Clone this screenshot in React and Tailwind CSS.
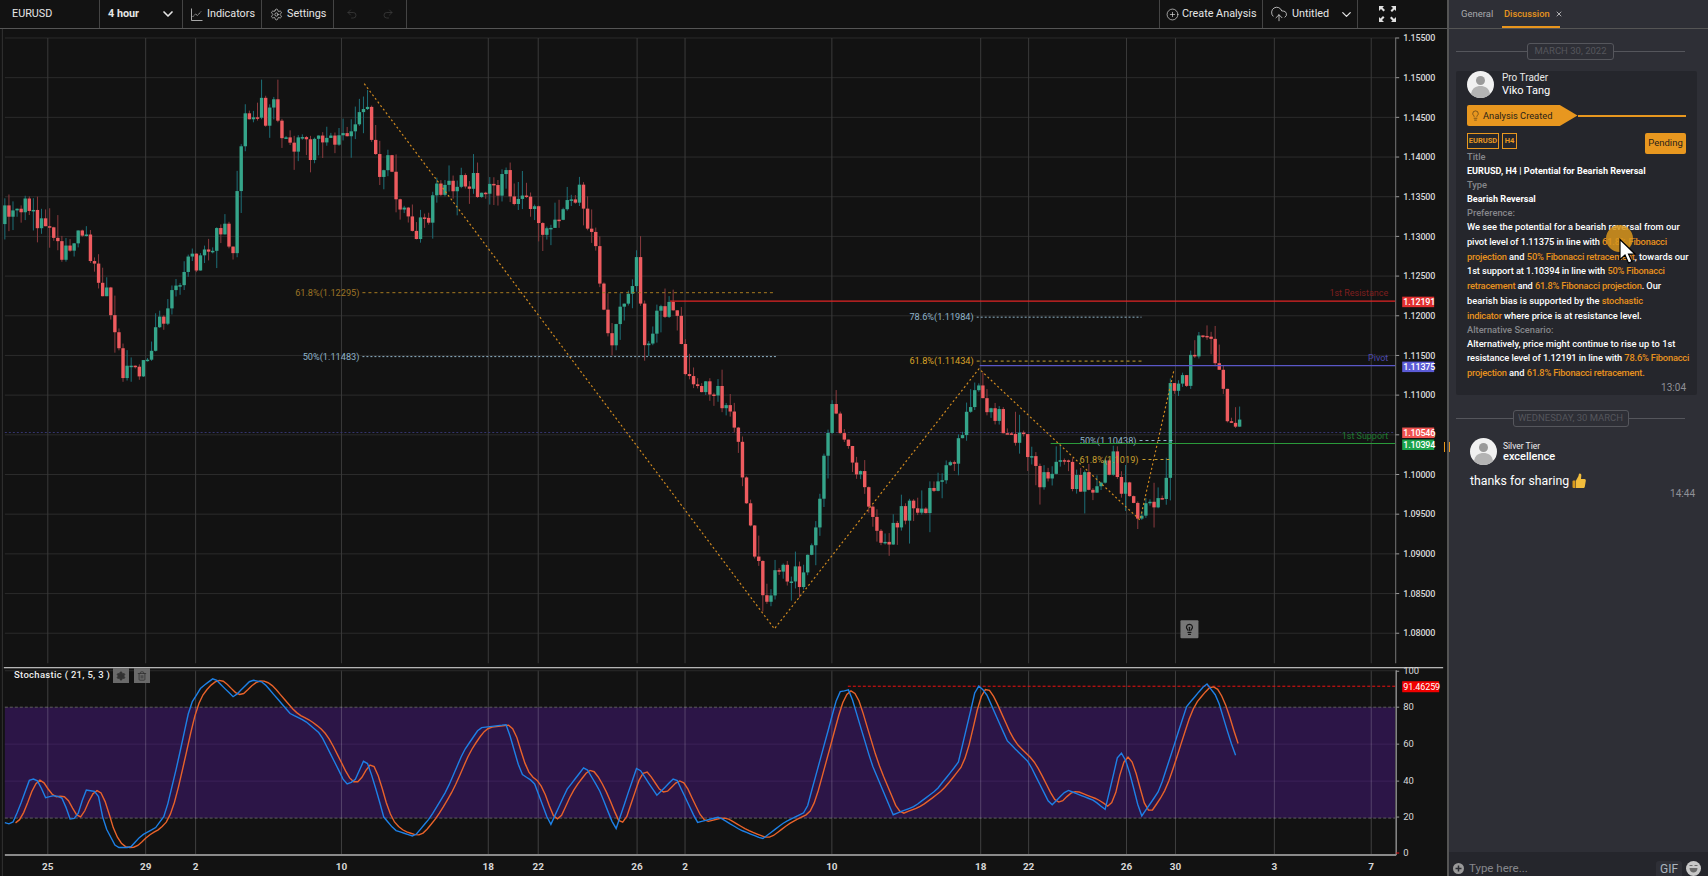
import React from "react";
import { ChevronDown, Settings, CirclePlus, CloudUpload, Undo2, Redo2, Lightbulb, X, Trash2 } from "lucide-react";

const S = 1.0893;

// price path, in screenshot coordinates
const pathStart = [
  [0, 205], [8, 190], [15, 180], [30, 195], [45, 212], [60, 232], [75, 212], [85, 235], [95, 265], [105, 300], [110, 335],
  [125, 340], [140, 315], [155, 275], [170, 245],
];
// this stretch was read off a 3x crop at (200,90)
const pathCrop = [
  [0, 505], [25, 480], [38, 440], [60, 420], [85, 440], [100, 470], [112, 280], [125, 95], [145, 90], [165, 60], [185, 50],
  [200, 90], [220, 60], [235, 125], [260, 130], [280, 150], [300, 120], [320, 185], [350, 170], [385, 145], [410, 120],
  [435, 130], [465, 100], [488, 95], [495, 10], [505, 50], [510, 130], [530, 230], [570, 210], [580, 330], [610, 320],
  [625, 400], [650, 420], [690, 400], [700, 310], [740, 310], [770, 255], [820, 260], [835, 300], [880, 295], [920, 270],
  [935, 380], [960, 310], [985, 290], [1000, 370], [1030, 420], [1055, 420], [1070, 340], [1090, 380], [1130, 310],
  [1150, 320], [1165, 420], [1190, 460], [1195, 590],
].map(([x, y]) => [(200 + x / 3) / S, (90 + y / 3) / S]);
const pathEnd = [
  [560, 315], [575, 270], [585, 240], [590, 320], [605, 280], [620, 290], [630, 345], [650, 355], [670, 375],
  [680, 420], [693, 510], [703, 550], [715, 525], [735, 530], [750, 480], [763, 370], [775, 400], [790, 440], [808, 495],
  [820, 490], [835, 460], [850, 465], [870, 430], [885, 400], [897, 340], [905, 370], [925, 395], [945, 410], [955, 450],
  [970, 415], [990, 445], [1010, 440], [1022, 420], [1040, 470], [1055, 460], [1072, 445], [1075, 350], [1090, 345],
  [1100, 315], [1112, 310], [1120, 350], [1130, 385], [1138, 395],
];
const pricePath = [...pathStart, ...pathCrop, ...pathEnd];

// %K line, in screenshot coordinates
const stochPath = [
  [3, 755], [10, 757], [16, 744], [27, 714], [37, 718], [38, 733], [50, 730], [57, 733], [64, 753], [70, 750], [78, 725],
  [89, 727], [95, 757], [106, 778], [119, 778], [129, 767], [142, 760], [151, 748], [163, 698], [174, 647], [184, 631],
  [196, 622], [214, 640], [230, 624], [241, 626], [266, 655], [280, 662], [294, 674], [317, 720], [325, 717], [335, 695],
  [342, 715], [352, 750], [362, 762], [380, 768], [395, 750], [410, 725], [425, 690], [440, 668], [465, 665], [478, 710],
  [490, 718], [505, 758], [520, 725], [537, 703], [550, 725], [565, 762], [585, 703], [603, 730], [620, 713], [640, 755],
  [660, 750], [680, 762], [700, 770], [720, 755], [740, 745], [755, 690], [770, 635], [780, 633], [800, 700], [820, 748],
  [840, 740], [860, 725], [880, 700], [897, 628], [905, 635], [925, 680], [945, 700], [965, 740], [980, 725], [1005, 735],
  [1015, 743], [1028, 688], [1035, 700], [1048, 750], [1065, 725], [1090, 648], [1108, 627], [1118, 640], [1130, 680], [1138, 702],
];

const interp = (path, x) => {
  for (let i = 1; i < path.length; i++) {
    if (x <= path[i][0]) {
      const [x0, y0] = path[i - 1];
      const [x1, y1] = path[i];
      return y0 + ((y1 - y0) * (x - x0)) / (x1 - x0 || 1);
    }
  }
  return path[path.length - 1][1];
};

const makeCandles = () => {
  let seed = 4242;
  const rnd = () => {
    seed = (seed * 16807) % 2147483647;
    return seed / 2147483647;
  };
  const out = [];
  let prev = interp(pricePath, 0) * S;
  for (let x = 4; x < 1241; x += 4.08) {
    const close = interp(pricePath, x / S) * S + (rnd() - 0.5) * 24;
    const top = Math.min(prev, close);
    const bottom = Math.max(prev, close);
    out.push({
      x,
      top,
      h: Math.max(bottom - top, 1.5),
      high: top - rnd() * rnd() * 26,
      low: bottom + rnd() * rnd() * 26,
      up: close < prev,
    });
    prev = close;
  }
  return out;
};

const candles = makeCandles();

const kPoints = [];
for (let x = 4; x < 1240; x += 4.08) kPoints.push([x, interp(stochPath, x / S) * S]);
const dPoints = kPoints.slice(2).map((p, i) => [p[0] + 2.5, (kPoints[i][1] + kPoints[i + 1][1] + p[1]) / 3]);
const toLine = (pts) => pts.map((p) => p[0].toFixed(1) + "," + p[1].toFixed(1)).join(" ");

const priceTicks = [
  "1.15500", "1.15000", "1.14500", "1.14000", "1.13500", "1.13000", "1.12500", "1.12000",
  "1.11500", "1.11000", "1.10500", "1.10000", "1.09500", "1.09000", "1.08500", "1.08000",
];
const timeTicks = [
  [47, "25"], [145, "29"], [195, "2"], [341, "10"], [488, "18"], [538, "22"], [637, "26"], [685, "2"],
  [832, "10"], [981, "18"], [1029, "22"], [1127, "26"], [1176, "30"], [1275, "3"], [1372, "7"],
];
const stochTicks = [[100, 671], [80, 707], [60, 744], [40, 781], [20, 817], [0, 853]];

const zigzag = [[334, 76], [711, 577], [899, 338], [1047, 477], [1078, 340]];

const dottedLines = [
  { x1: 362, x2: 776, y: 292, c: "#a87a20", dash: "3 3" },
  { x1: 362, x2: 776, y: 356, c: "#8fb3c8", dash: "2 2" },
  { x1: 977, x2: 1142, y: 316.5, c: "#8fb3c8", dash: "2 2" },
  { x1: 977, x2: 1142, y: 360.5, c: "#c9a030", dash: "3 3" },
  { x1: 1140, x2: 1175, y: 440, c: "#8fb3c8", dash: "3 3" },
  { x1: 1143, x2: 1173, y: 459, c: "#c9a030", dash: "3 3" },
];

const fibLabels = [
  { x: 359, y: 292, t: "61.8%(1.12295)", c: "#9c7426" },
  { x: 359, y: 356, t: "50%(1.11483)", c: "#8fb3c8" },
  { x: 974, y: 316.5, t: "78.6%(1.11984)", c: "#8fb3c8" },
  { x: 974, y: 360.5, t: "61.8%(1.11434)", c: "#d9a227" },
  { x: 1137, y: 440, t: "50%(1.10438)", c: "#8fb3c8" },
  { x: 1139, y: 459, t: "61.8%(1.1019)", c: "#c9a030" },
];

const levels = [
  { x1: 670, y: 300.5, c: "#e02525", name: "1st Resistance", nameC: "#7f1f1f", tag: "1.12191", tagBg: "#e23030", tagY: 301 },
  { x1: 980, y: 365, c: "#5a57c7", name: "Pivot", nameC: "#4d49ad", tag: "1.11375", tagBg: "#5b5bd6", tagY: 366 },
  { x1: 1051, y: 443, c: "#2a9a3a", name: "1st Support", nameC: "#1f7a30", tag: "1.10394", tagBg: "#1aa34a", tagY: 444 },
];

function Chart() {
  return (
    <svg width="1447" height="848" viewBox="0 28 1447 848" className="block">
      {/* price grid */}
      {priceTicks.map((t, i) => {
        const y = 37 + i * 39.73;
        return (
          <g key={t}>
            <line x1="4" x2="1396" y1={y} y2={y} stroke="#2b2b2b" />
            <line x1="1396" x2="1400" y1={y} y2={y} stroke="#999" />
            <text x="1404" y={y + 3.2} fontSize="9" fontWeight="500" letterSpacing="-0.15" fill="#d8d8d8">{t}</text>
          </g>
        );
      })}
      {timeTicks.map(([x, t]) => (
        <g key={x + t}>
          <line x1={x} x2={x} y1="37" y2="663" stroke="#3a3a3a" />
          <text x={x} y="870" fontSize="10" fontWeight="700" fill="#d8d8d8" textAnchor="middle">{t}</text>
        </g>
      ))}
      <line x1="1396.5" x2="1396.5" y1="37" y2="663" stroke="#777" />
      <line x1="1.5" x2="1.5" y1="28" y2="876" stroke="#333" />

      {/* dotted line of the last price, under the candles */}
      <line x1="4" x2="1396" y1="432" y2="432" stroke="#35356e" strokeDasharray="2 2" />

      {candles.map((c, i) => (
        <g key={i}>
          <line x1={c.x} x2={c.x} y1={c.high} y2={c.low} stroke={c.up ? "#1d6f78" : "#8b3a3e"} />
          <rect x={c.x - 1.7} y={c.top} width="3.4" height={c.h} fill={c.up ? "#35a58a" : "#ee5b5f"} />
        </g>
      ))}

      <polyline
        points={zigzag.map((p) => p[0] * S + "," + p[1] * S).join(" ")}
        fill="none"
        stroke="#d08a20"
        strokeWidth="1.2"
        strokeDasharray="2 2.5"
      />
      {dottedLines.map((l, i) => (
        <line key={i} x1={l.x1} x2={l.x2} y1={l.y} y2={l.y} stroke={l.c} strokeDasharray={l.dash} />
      ))}
      {fibLabels.map((l) => (
        <text key={l.t} x={l.x} y={l.y + 3.2} fontSize="9.2" fill={l.c} textAnchor="end">{l.t}</text>
      ))}

      {levels.map((l) => (
        <g key={l.name}>
          <line x1={l.x1} x2="1396" y1={l.y} y2={l.y} stroke={l.c} strokeWidth="1.2" />
          <text x="1389" y={l.y - 5} fontSize="9" fill={l.nameC} textAnchor="end">{l.name}</text>
          <rect x="1403" y={l.tagY - 5} width="32" height="10.5" fill={l.tagBg} />
          <text x="1404" y={l.tagY + 3.5} fontSize="9" fontWeight="500" letterSpacing="-0.15" fill="#fff">{l.tag}</text>
        </g>
      ))}
      <rect x="1403" y="427" width="32" height="10.5" fill="#ef5350" />
      <text x="1404" y="435.5" fontSize="9" fontWeight="500" letterSpacing="-0.15" fill="#fff">1.10546</text>

      {/* lightbulb marker */}
      <rect x="1181" y="620" width="18" height="18" rx="1" fill="#777" />
      <g transform="translate(1184,623) scale(0.5)" fill="none" stroke="#161616" strokeWidth="2.400" strokeLinecap="round" strokeLinejoin="round">
        <path d="M15 14c.2-1 .7-1.700 1.500-2.500 1-.9 1.500-2.200 1.500-3.500A6 6 0 0 0 6 8c0 1 .2 2.200 1.500 3.500.7.7 1.300 1.500 1.500 2.500" />
        <path d="M9 18h6" />
        <path d="M10 22h4" />
        <path d="M12 8v6" />
      </g>

      {/* stochastic panel */}
      <rect x="4" y="707" width="1392" height="111" fill="#2c1547" />
      <line x1="4" x2="1396" y1="707" y2="707" stroke="#5e5e5e" strokeDasharray="3 2" />
      <line x1="4" x2="1396" y1="818" y2="818" stroke="#5e5e5e" strokeDasharray="3 2" />
      <line x1="4" x2="1396" y1="744" y2="744" stroke="#3c2258" />
      <line x1="4" x2="1396" y1="781" y2="781" stroke="#3c2258" />
      {timeTicks.map(([x, t]) => (
        <line key={x + t} x1={x} x2={x} y1="670" y2="855" stroke="#fff" strokeOpacity="0.2" />
      ))}
      <line x1="3" x2="1444" y1="667.5" y2="667.5" stroke="#e8e8e8" />
      <line x1="4" x2="1396" y1="670.5" y2="670.5" stroke="#2b2b2b" />
      <line x1="848" x2="1396" y1="686" y2="686" stroke="#f01010" strokeDasharray="3 2" />
      <polyline points={toLine(dPoints)} fill="none" stroke="#e8622a" strokeWidth="1.4" />
      <polyline points={toLine(kPoints)} fill="none" stroke="#1e80e6" strokeWidth="1.4" />
      <line x1="4" x2="1397" y1="855" y2="855" stroke="#8a8a8a" strokeWidth="2" />
      <line x1="1397" x2="1397" y1="670" y2="855" stroke="#8a8a8a" strokeWidth="1.5" />
      {stochTicks.map(([v, y]) => (
        <g key={v}>
          <line x1="1397" x2="1400" y1={y} y2={y} stroke={v === 0 ? "#f01010" : "#999"} />
          <text x="1404" y={y + 3.2} fontSize="9.5" fill="#d8d8d8">{v}</text>
        </g>
      ))}
      <rect x="1403" y="681" width="37" height="11" fill="#f00000" />
      <text x="1404" y="690" fontSize="9" letterSpacing="-0.1" fill="#fff">91.46259</text>
    </svg>
  );
}

const ToolCell = ({ className, children }) => (
  <div className={"flex h-full shrink-0 items-center whitespace-nowrap border-r border-[#444] " + className}>{children}</div>
);

function Toolbar() {
  return (
    <div className="flex h-[29px] shrink-0 items-center border-b border-[#555] bg-[#121212] text-[10.8px] text-[#e6e6e6]">
      <ToolCell className="w-[100px] pl-[12px]">EURUSD</ToolCell>
      <ToolCell className="w-[83px] justify-between pl-[8px] pr-[6px] font-bold">
        4 hour
        <ChevronDown size={16} strokeWidth={2.5} />
      </ToolCell>
      <ToolCell className="w-[79px] gap-[4px] pl-[8px]">
        <svg width="12" height="13" viewBox="0 0 12 13" fill="none" stroke="#cfcfcf" strokeWidth="0.8">
          <path d="M.5.5v12h11" />
          <path d="M1.500 9l3-3 2 1.500L10 3.500" strokeDasharray="1.600 .6" />
        </svg>
        Indicators
      </ToolCell>
      <ToolCell className="w-[72px] gap-[4px] pl-[8px]">
        <Settings size={13} strokeWidth={1.2} />
        Settings
      </ToolCell>
      <ToolCell className="w-[73px] gap-[24px] pl-[12px] text-[#3d3d3d]">
        <Undo2 size={12} strokeWidth={1.5} />
        <Redo2 size={12} strokeWidth={1.5} />
      </ToolCell>
      <div className="flex-1" />
      <div className="flex h-full w-[104px] shrink-0 items-center gap-[3px] whitespace-nowrap border-x border-[#444] pl-[6px]">
        <CirclePlus size={13} strokeWidth={1.2} />
        Create Analysis
      </div>
      <ToolCell className="w-[95px] gap-[4px] pl-[7px]">
        <CloudUpload size={18} strokeWidth={1} />
        Untitled
        <ChevronDown size={15} strokeWidth={2} className="ml-[6px]" />
      </ToolCell>
      <div className="flex h-full w-[89px] shrink-0 items-center pl-[21px]">
        <svg width="17" height="16" viewBox="0 0 17 16" fill="#e0e0e0">
          <path d="M0 0h5L3.500 1.500 6 4 4.500 5.500 2 3 .5 4.500 0 5z" />
          <path d="M17 0v5l-1.500-1.500L13 6l-1.500-1.500L14 2l-1.500-1.500L12 0z" />
          <path d="M0 16v-5l1.500 1.500L4 10l1.500 1.500L3 14l1.500 1.500L5 16z" />
          <path d="M17 16h-5l1.500-1.500L11 12l1.500-1.500L15 13l1.500-1.500.5-.5z" />
        </svg>
      </div>
    </div>
  );
}

const Avatar = ({ size }) => (
  <svg width={size} height={size} viewBox="0 0 27 27" className="shrink-0">
    <circle cx="13.5" cy="13.5" r="13.5" fill="#f1f1f1" />
    <circle cx="13.5" cy="9.500" r="4.500" fill="#9a9a9a" />
    <path d="M4 23c1-6 5-8 9.500-8s8.500 2 9.500 8a13.500 13.500 0 0 1-19 0z" fill="#b4b4b4" />
  </svg>
);

const DateSeparator = ({ label, boxClass }) => (
  <div className="flex h-[17px] items-center pl-[7px] pr-[23px]">
    <div className="h-px flex-1 bg-[#55565c]" />
    <div className={"flex h-[17px] shrink-0 items-center justify-center rounded-[3px] border border-[#55565c] text-[9.5px] text-[#55565c] " + boxClass}>
      {label}
    </div>
    <div className="h-px flex-1 bg-[#55565c]" />
  </div>
);

const Label = ({ children }) => <div className="h-[14px] leading-[14px] text-[#85868b]">{children}</div>;
const Strong = ({ children }) => <div className="h-[14px] text-[9.1px] font-bold leading-[14px] text-white">{children}</div>;
const Line = ({ children, tight }) => (
  <div className={"h-[14.8px] whitespace-nowrap leading-[14.8px] text-white " + (tight ? "tracking-[-0.1px]" : "")}>{children}</div>
);
const Hl = ({ children }) => <span className="tracking-[-0.2px] text-[#e8921e]">{children}</span>;

function AnalysisCard() {
  return (
    <div className="ml-[7px] mt-[11px] h-[324px] w-[241px] rounded-[2px] bg-[#25262c] px-[11px] text-[9.3px] font-medium">
      <div className="flex h-[27px] items-center gap-[8px]">
        <Avatar size={27} />
        <div className="font-normal">
          <div className="text-[10px] leading-[12px] text-[#e8e8e8]">Pro Trader</div>
          <div className="text-[11px] leading-[14px] text-white">Viko Tang</div>
        </div>
      </div>
      <div className="mt-[7px] flex h-[21px] items-center">
        <div className="flex h-full w-[112px] items-center gap-[2px] rounded-l-[2px] bg-[#e8971f] pl-[3px] font-normal text-[#2a2218] [clip-path:polygon(0_0,84%_0,100%_50%,84%_100%,0_100%)]">
          <Lightbulb size={11} strokeWidth={1.2} />
          Analysis Created
        </div>
        <div className="h-[2px] w-[110px] bg-[#e8971f]" />
      </div>
      <div className="mt-[7px] flex h-[17px] items-start justify-between">
        <div className="flex gap-[3px] text-[7.5px] font-bold text-[#e8971f]">
          <div className="flex h-[16px] w-[32px] items-center justify-center border border-[#e8971f]">EURUSD</div>
          <div className="flex h-[16px] w-[15px] items-center justify-center border border-[#e8971f]">H4</div>
        </div>
        <div className="flex h-[21px] w-[41px] items-center justify-center rounded-[2px] bg-[#e8971f] text-[9.5px] font-normal text-[#2a2218]">
          Pending
        </div>
      </div>
      <Label>Title</Label>
      <Strong>EURUSD, H4 | Potential for Bearish Reversal</Strong>
      <Label>Type</Label>
      <Strong>Bearish Reversal</Strong>
      <Label>Preference:</Label>
      <Line>We see the potential for a bearish reversal from our</Line>
      <Line tight>pivot level of 1.11375 in line with <Hl>61.8% Fibonacci</Hl></Line>
      <Line><Hl>projection</Hl> and <Hl>50% Fibonacci retracement</Hl>, towards our</Line>
      <Line tight>1st support at 1.10394 in line with <Hl>50% Fibonacci</Hl></Line>
      <Line tight><Hl>retracement</Hl> and <Hl>61.8% Fibonacci projection</Hl>. Our</Line>
      <Line>bearish bias is supported by the <Hl>stochastic</Hl></Line>
      <Line><Hl>indicator</Hl> where price is at resistance level.</Line>
      <div className="-mt-[1px]">
        <Label>Alternative Scenario:</Label>
      </div>
      <Line>Alternatively, price might continue to rise up to 1st</Line>
      <Line tight>resistance level of 1.12191 in line with <Hl>78.6% Fibonacci</Hl></Line>
      <Line><Hl>projection</Hl> and <Hl>61.8% Fibonacci retracement.</Hl></Line>
      <div className="h-[14px] text-right text-[10px] font-normal leading-[14px] text-[#8f9096]">13:04</div>
    </div>
  );
}

function Sidebar() {
  return (
    <div className="relative flex w-[261px] shrink-0 flex-col border-l-2 border-[#555] bg-[#2e2f36]">
      <div className="flex h-[29px] shrink-0 border-b border-[#555] text-[9.5px]">
        <div className="ml-[12px] w-[32px] pt-[7px] text-[#a8a9ad]">General</div>
        <div className="ml-[9px] flex h-[28px] w-[58px] items-start gap-[5px] border-b-2 border-[#e8951d] pl-[2px] pt-[7px] font-medium text-[#e8951d]">
          <span className="text-[9.3px]">Discussion</span>
          <X size={8} strokeWidth={2.2} className="mt-[3px] shrink-0 text-[#ddd]" />
        </div>
      </div>
      <div className="flex-1">
        <div className="mt-[14px]">
          <DateSeparator label="MARCH 30, 2022" boxClass="w-[87px]" />
        </div>
        <AnalysisCard />
        <div className="mt-[15px]">
          <DateSeparator label="WEDNESDAY, 30 MARCH" boxClass="w-[116px]" />
        </div>
        <div className="ml-[21px] mt-[11px] flex h-[27px] items-center gap-[6px]">
          <Avatar size={27} />
          <div>
            <div className="text-[8.5px] leading-[10px] text-[#eee]">Silver Tier</div>
            <div className="text-[11px] font-medium leading-[12px] text-white">excellence</div>
          </div>
        </div>
        <div className="ml-[21px] mt-[7px] flex h-[18px] items-center gap-[3px] text-[12.3px] text-white">
          thanks for sharing
          <svg width="14" height="16" viewBox="0 0 14 16">
            <path d="M1 7.500h2.500V15H1.500A1 1 0 0 1 .5 14V8.500a1 1 0 0 1 .5-1z" fill="#d99a1c" />
            <path d="M4 7.500 6.500 3c.2-1 .2-2 1-2.500 1.300-.3 2 .8 1.800 2.200L9 6h3.500c1 0 1.500.9 1.300 1.800l-1 6c-.2.8-.7 1.200-1.500 1.200H4z" fill="#f2bd3c" />
          </svg>
        </div>
        <div className="-mt-[2px] pr-[13px] text-right text-[10px] leading-[12px] text-[#8f9096]">14:44</div>
      </div>
      <div className="flex h-[24px] shrink-0 items-center bg-[#25262c] pl-[4px] pt-[9px] text-[11.5px] text-[#85868b]">
        <svg width="11" height="11" viewBox="0 0 11 11" className="shrink-0">
          <circle cx="5.500" cy="5.500" r="5.500" fill="#9a9a9a" />
          <path d="M5.500 2.500v6M2.500 5.500h6" stroke="#2b2c32" strokeWidth="1.500" />
        </svg>
        <span className="ml-[5px]">Type here...</span>
        <div className="ml-auto flex h-[15px] w-[26px] items-center justify-center rounded-t-[3px] bg-[#2e2f36] text-[12px] text-[#aab3bd]">GIF</div>
        <svg width="15" height="15" viewBox="0 0 15 15" className="ml-[4px] mr-[7px] shrink-0">
          <circle cx="7.500" cy="7.500" r="7.500" fill="#c8c8c8" />
          <path d="M3.500 7h8c0 3-2 4.500-4 4.500S3.500 10 3.500 7z" fill="#6a6a6a" />
          <path d="M3.500 4.500h3M8.500 4.500h3" stroke="#6a6a6a" />
        </svg>
      </div>

      {/* pointer highlight over the message */}
      <div className="absolute left-[157px] top-[225px] h-[27px] w-[27px] rounded-full bg-[#d8951c] opacity-85" />
      <svg width="20" height="28" viewBox="0 0 20 27" className="absolute left-[170px] top-[238px]">
        <path d="M1 1v20l5-4.500 3.500 8 3.500-1.500-3.500-7.500H16z" fill="#fff" stroke="#000" strokeWidth="1.200" />
      </svg>
    </div>
  );
}

export default function App() {
  return (
    <div className="relative flex h-[876px] w-[1708px] overflow-hidden bg-[#121212] font-['Roboto',sans-serif]">
      <div className="flex w-[1447px] shrink-0 flex-col">
        <Toolbar />
        <Chart />
      </div>
      <Sidebar />
      {/* pane resize handle */}
      <div className="absolute left-[1444px] top-[442px] h-[10px] w-[6px] border-x border-[#e8951d]" />
      {/* indicator legend */}
      <div className="absolute left-[14px] top-[668px] flex h-[15px] items-center whitespace-nowrap text-[9.5px] font-medium tracking-[0.3px] text-[#eee]">
        <span className="w-[99px]">Stochastic ( 21, 5, 3 )</span>
        <span className="flex h-[15px] w-[16px] items-center justify-center bg-[#6a6a6a] text-[#333]">
          <Settings size={10} fill="#333" />
        </span>
        <span className="ml-[5px] flex h-[15px] w-[16px] items-center justify-center bg-[#6a6a6a] text-[#333]">
          <Trash2 size={10} />
        </span>
      </div>
    </div>
  );
}
